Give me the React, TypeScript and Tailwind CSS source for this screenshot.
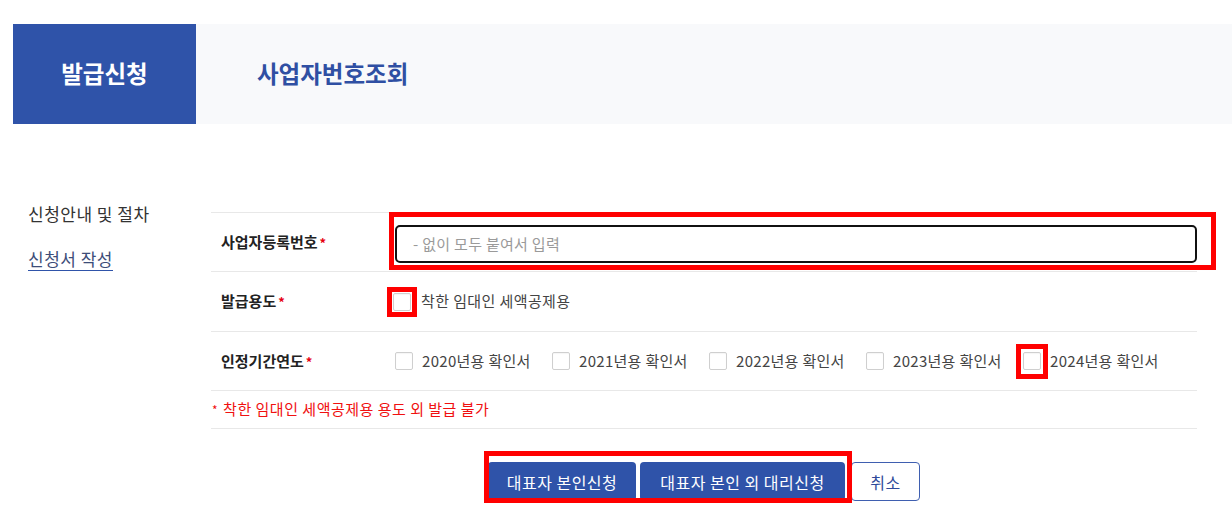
const years = ["2020", "2021", "2022", "2023", "2024"];

function Box() {
	return (
		<span className="inline-block h-[18px] w-[18px] flex-none rounded-[2px] border border-[#cfcfcf] bg-white shadow-[inset_0_1px_1px_rgba(0,0,0,0.04)]" />
	);
}

function Req() {
	return <span className="ml-[2px] text-[13px] text-[#e60012]">*</span>;
}

export default function App() {
	return (
		<div className="relative h-[521px] w-[1232px] overflow-hidden bg-white font-['Noto_Sans_CJK_KR','Noto_Sans',sans-serif] text-[#333]">
			{/* tabs */}
			<div className="ml-[13px] mt-[24px] flex h-[100px]">
				<div className="flex w-[183px] items-center justify-center bg-[#2f53a9] text-[23.5px] font-bold text-white">
					발급신청
				</div>
				<div className="flex flex-1 items-center bg-[#f8f9fb] pl-[61px] text-[23.5px] font-bold text-[#2f4fa3]">
					사업자번호조회
				</div>
			</div>

			<div className="ml-[28px] mt-[79px] flex">
				{/* side menu */}
				<div className="w-[183px] text-[17px] tracking-[0.5px]">
					<div className="leading-[22px] text-[#333]">신청안내 및 절차</div>
					<div className="mt-[21px]">
						<span className="inline-block border-b border-[#2f53a9] leading-[22px] text-[#3d4d78]">
							신청서 작성
						</span>
					</div>
				</div>

				{/* form */}
				<div className="w-[986px] pt-[9px]">
					<div className="border-t border-[#e8e8e8]">
						<div className="flex h-[59px] items-center border-b border-[#e8e8e8]">
							<div className="w-[184px] pl-[10px] text-[15px] font-bold text-[#222]">
								사업자등록번호
								<Req />
							</div>
							<div className="flex-1 pt-[3px]">
								<input
									placeholder="- 없이 모두 붙여서 입력"
									className="h-[38px] w-full rounded-[5px] border-2 border-[#111] bg-white pl-[16px] text-[15px] tracking-[0.3px] text-[#333] outline-none placeholder:text-[#9a9a9a]"
								/>
							</div>
						</div>

						<div className="flex h-[60px] items-center border-b border-[#e8e8e8]">
							<div className="w-[182px] pl-[10px] text-[15px] font-bold text-[#222]">
								발급용도
								<Req />
							</div>
							<label className="flex items-center">
								<Box />
								<span className="ml-[10px] text-[15px] tracking-[0.4px] text-[#444]">착한 임대인 세액공제용</span>
							</label>
						</div>

						<div className="flex h-[59px] items-center border-b border-[#e8e8e8]">
							<div className="w-[184px] pl-[10px] text-[15px] font-bold text-[#222]">
								인정기간연도
								<Req />
							</div>
							<div className="flex">
								{years.map((y) => (
									<label key={y} className="flex w-[157px] items-center">
										<Box />
										<span className="ml-[9px] whitespace-nowrap text-[15px] tracking-[0.3px] text-[#444]">
											{y}년용 확인서
										</span>
									</label>
								))}
							</div>
						</div>

						<div className="flex h-[38px] items-center border-b border-[#e8e8e8] pl-[1px] text-[15px] tracking-[0.5px] text-[#f01010]">
							<span className="mr-[5px] text-[12px]">*</span>착한 임대인 세액공제용 용도 외 발급 불가
						</div>
					</div>

					<div className="mt-[33px] flex justify-center">
						<button className="h-[39px] w-[148px] rounded-[4px] bg-[#2f53a9] text-[16px] tracking-[0.5px] text-white">
							대표자 본인신청
						</button>
						<button className="ml-[4px] h-[39px] w-[205px] rounded-[4px] bg-[#2f53a9] text-[16px] tracking-[0.5px] text-white">
							대표자 본인 외 대리신청
						</button>
						<button className="ml-[6px] h-[39px] w-[69px] rounded-[4px] border border-[#3f5fb0] bg-white text-[16px] tracking-[0.5px] text-[#2f4a9a]">
							취소
						</button>
					</div>
				</div>
			</div>

			{/* red annotation boxes */}
			<div className="pointer-events-none absolute left-[389px] top-[212px] h-[58px] w-[827px] border-[5px] border-[#ff0000]" />
			<div className="pointer-events-none absolute left-[387px] top-[287px] h-[30px] w-[30px] border-[5px] border-[#ff0000]" />
			<div className="pointer-events-none absolute left-[1016px] top-[344px] h-[35px] w-[32px] border-[5px] border-[#ff0000]" />
			<div className="pointer-events-none absolute left-[484px] top-[451px] h-[52px] w-[368px] border-[5px] border-[#ff0000]" />
		</div>
	);
}
